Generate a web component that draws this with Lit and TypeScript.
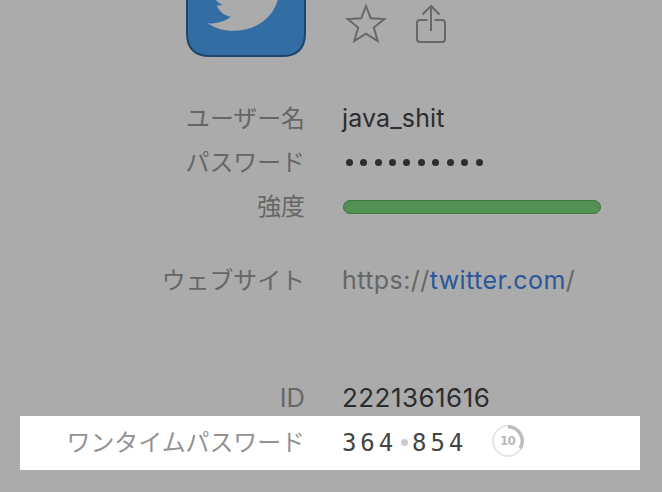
import { LitElement, html, css } from "lit";
import { customElement, property } from "lit/decorators.js";

@customElement("field-row")
class FieldRow extends LitElement {
  @property() label = "";

  static styles = css`
    :host {
      display: grid;
      grid-template-columns: 305px 1fr;
      column-gap: 37px;
      height: 44px;
      align-items: center;
      white-space: nowrap;
    }
    .label {
      height: 44px;
      text-align: right;
      color: var(--label-color, #666);
      font-size: var(--label-size, 23.9px);
      line-height: var(--label-line, 46px);
      font-weight: 400;
    }
    .value {
      display: flex;
      align-items: center;
      height: 44px;
      line-height: 44px;
    }
  `;

  render() {
    return html`<div class="label">${this.label}</div>
      <div class="value"><slot></slot></div>`;
  }
}

@customElement("countdown-ring")
class CountdownRing extends LitElement {
  @property({ type: Number }) seconds = 0;

  static styles = css`
    :host {
      display: grid;
      place-items: center;
      width: 32px;
      height: 32px;
    }
    svg,
    .count {
      grid-area: 1 / 1;
    }
    .count {
      font: 700 12px/32px "DejaVu Sans", sans-serif;
      letter-spacing: -0.8px;
      margin-right: 1px;
      color: #b9b9b9;
    }
  `;

  render() {
    const length = 2 * Math.PI * 14.25;
    const arc = (length * this.seconds) / 30;
    return html`<svg width="32" height="32" viewBox="0 0 32 32" fill="none">
        <circle cx="16" cy="16" r="15" stroke="#e5e5e5" stroke-width="2" />
        <circle cx="16" cy="16" r="14.25" stroke="#bdbdbd" stroke-width="3.5"
          stroke-dasharray="${arc} ${length}" transform="rotate(-90 16 16)" />
      </svg>
      <span class="count">${this.seconds}</span>`;
  }
}

@customElement("app-root")
class AppRoot extends LitElement {
  static styles = css`
    :host {
      display: block;
      width: 662px;
      height: 492px;
      overflow: hidden;
      background: #ababab;
      color: #2d2d2d;
      font-family: Inter, "Noto Sans CJK JP", sans-serif;
      font-size: 25px;
    }
    .header {
      display: flex;
      height: 96px;
      padding-left: 186px;
      align-items: flex-start;
    }
    .header svg {
      display: block;
    }
    .star {
      margin: 3px 0 0 39px;
    }
    .share {
      margin: 4px 0 0 27px;
    }
    .website {
      margin-top: 30px;
    }
    .ident {
      margin-top: 74px;
      height: 40px;
      --label-size: 25.5px;
      --label-line: 44px;
    }
    .user {
      letter-spacing: 0.15px;
    }
    .number {
      font-size: 26px;
      letter-spacing: 0.45px;
    }
    .dots {
      display: flex;
      gap: 7.46px;
      padding-left: 3.6px;
    }
    .dot {
      width: 7px;
      height: 7px;
      border-radius: 50%;
      background: #2d2d2d;
    }
    .meter {
      box-sizing: border-box;
      width: 258px;
      height: 14px;
      margin: 2px 0 0 1px;
      border: 1px solid #3f7541;
      border-radius: 7px;
      background: #539153;
    }
    .url {
      color: #666;
      letter-spacing: 0.43px;
    }
    .link {
      color: #2a579a;
    }
    .otp {
      box-sizing: border-box;
      height: 54px;
      margin: 0 22px 0 20px;
      padding-top: 4px;
      background: #fff;
      --label-color: #929292;
    }
    .otp field-row {
      margin-left: -20px;
    }
    .code {
      padding-top: 2px;
      font: 24px/44px "DejaVu Sans Mono", monospace;
      letter-spacing: 3.9px;
      color: #444;
    }
    .separator {
      width: 7px;
      height: 7px;
      margin: 0 4px 0 4px;
      border-radius: 50%;
      background: #ccc;
    }
    countdown-ring {
      margin: -3px 0 0 25px;
    }
  `;

  render() {
    return html`
      <div class="header">
        <svg width="120" height="57" viewBox="0 0 120 57">
          <path d="M1-20V33Q1 56 24 56H96Q119 56 119 33V-20Z" fill="#326ea3" stroke="#1d466d" stroke-width="2" />
          <path d="M29-1Q31 2.5 36.7 4.7Q34 5.6 30.7 5.3C33 11.5 38 15.7 45 16.7C38 22 29 24 21.7 23.3C29 28.3 37.5 30.8 46.7 30.8C70 30.8 87 18 92-1Z" fill="#ababab" />
        </svg>
        <svg class="star" width="42" height="42" viewBox="0 0 42 42" fill="none" stroke="#686868" stroke-width="2">
          <path d="M21 3L25.7 15.2L39.3 16L28.8 24.5L32.7 38L21 30.6L9.3 38L13.2 24.5L2.7 16L16.3 15.2Z" />
        </svg>
        <svg class="share" width="34" height="40" viewBox="0 0 34 40" fill="none" stroke="#686868" stroke-width="2">
          <path d="M13.5 16H6Q3 16 3 19V35Q3 38 6 38H28Q31 38 31 35V19Q31 16 28 16H20.5M17 27V2M8.5 10.5L17 2L25.5 10.5" />
        </svg>
      </div>
      <field-row label="ユーザー名"><span class="user">java_shit</span></field-row>
      <field-row label="パスワード">
        <div class="dots">${Array.from({ length: 10 }, () => html`<i class="dot"></i>`)}</div>
      </field-row>
      <field-row label="強度"><div class="meter"></div></field-row>
      <field-row class="website" label="ウェブサイト">
        <span class="url">https://<span class="link">twitter.com</span>/</span>
      </field-row>
      <field-row class="ident" label="ID"><span class="number">2221361616</span></field-row>
      <div class="otp">
        <field-row label="ワンタイムパスワード">
          <span class="code">364</span><i class="separator"></i><span class="code">854</span>
          <countdown-ring seconds="10"></countdown-ring>
        </field-row>
      </div>
    `;
  }
}
